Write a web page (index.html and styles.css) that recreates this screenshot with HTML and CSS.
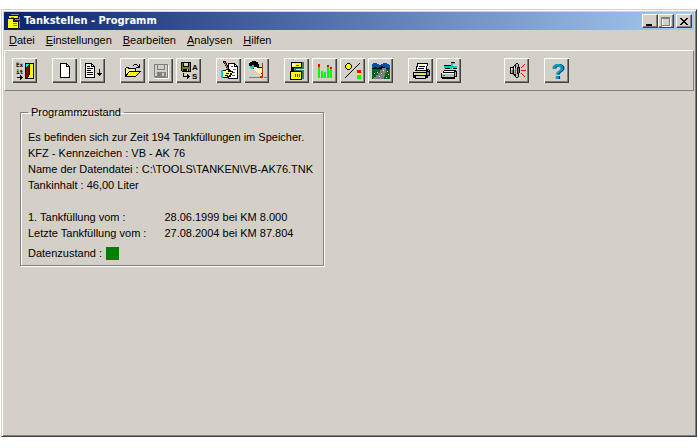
FILE: index.html
```html
<!DOCTYPE html>
<html lang="de">
<head>
<meta charset="utf-8">
<title>Tankstellen - Programm</title>
<link rel="stylesheet" href="styles.css">
</head>
<body>
<main class="window">
  <header class="titlebar">
    <svg class="app-icon" viewBox="0 0 16 16" aria-hidden="true"><path fill="#111" d="M2 2h2V1h9v1h-1v5H7v1h6v8H1V7h1z"/><path fill="#888" d="M4 1h8v1H4zM12 4h1v3H8V6h4zM12 8h1v7h-1z"/><path fill="#ff0" d="M2 3h9v2H2zM1 6h5v3h5v6H1z"/><path fill="#880" d="M6 10h4v1H6zM6 12h4v1H6zM4 4h3v1H4z"/></svg>
    <h1 class="title">Tankstellen - Programm</h1>
    <div class="window-controls">
      <button class="control" aria-label="Minimieren"><svg viewBox="0 0 13 11"><path d="M3 8h6v2H3z"/></svg></button>
      <button class="control" aria-label="Maximieren" disabled><svg viewBox="0 0 13 11"><path fill="none" stroke="#fff" d="M3.500 2.500h8v8h-8z"/><path fill="none" stroke="#808080" d="M2.500 1.500h8v8h-8zM2 2.500h9"/></svg></button>
      <button class="control close" aria-label="Schließen"><svg viewBox="0 0 13 11"><path d="M3 2h2v1h1v1h2V3h1V2h2v1h-1v1H9v1H8v1h1v1h1v1h1v1H9V8H8V7H6v1H5v1H3V8h1V7h1V6h1V5H5V4H4V3H3z"/></svg></button>
    </div>
  </header>
  <nav class="menubar">
    <button class="menu"><u>D</u>atei</button>
    <button class="menu"><u>E</u>instellungen</button>
    <button class="menu"><u>B</u>earbeiten</button>
    <button class="menu"><u>A</u>nalysen</button>
    <button class="menu"><u>H</u>ilfen</button>
  </nav>
  <div class="toolbar" role="toolbar" aria-label="Werkzeuge">
    <div class="group">
      <button class="tool" aria-label="Programm beenden"><svg viewBox="0 0 25 25"><text class="tiny" x="4" y="9">Ex</text><text class="tiny" x="4" y="16">it</text><path d="M5 19h3v-2h1v1h1v1h1v1h-1v1H9v1H8v-2H5zM13 5h9v16h-9z"/><path fill="#0ff" d="M14 6h3v1h-1v1h-1v1h-1z"/><path fill="#800000" d="M14 9h1V8h1V7h1v10h-1v2h-1v1h-1z"/><path fill="#ff0" d="M18 6h3v14h-5v-1h1v-2h1z"/></svg></button>
    </div>
    <div class="group">
      <button class="tool" aria-label="Neu"><svg viewBox="0 0 25 25"><path d="M8 5h7v1h1v1h1v1h1v12H8z"/><path fill="#fff" d="M9 6h5v3h3v10H9zM15 7h1v1h-1z"/></svg></button>
      <button class="tool" aria-label="Liste"><svg viewBox="0 0 25 25"><path d="M5 5h7v1h1v1h1v1h1v12H5z"/><path fill="#fff" d="M6 6h5v3h3v10H6zM12 7h1v1h-1z"/><path d="M7 8h3v1H7zM7 10h6v1H7zM7 12h4v1H7zM7 14h6v1H7zM7 16h6v1H7zM19 11h1v4h2v1h-1v1h-1v1h-1v-1h-1v-1h-1v-1h2z"/></svg></button>
    </div>
    <div class="group">
      <button class="tool" aria-label="Öffnen"><svg viewBox="0 0 25 25"><path d="M6 9h3v1h7v3h5v1h-1v1h-1v1h-1v1h-1v1h-1v1H5v-9h1z"/><path fill="#ffff80" d="M6 10h2v1h7v2H9v1H8v1H7v1H6z"/><path fill="#ff0" d="M9 14h10v1h-1v1h-1v1h-1v1H7v-1h1v-2h1z"/><path d="M13 7h1V6h3v1h1v1h1V6h1v4h-4V9h2V8h-1V7h-3v1h-1z"/></svg></button>
      <button class="tool" aria-label="Speichern" disabled><svg viewBox="0 0 25 25"><path fill="none" stroke="#fff" d="M7 20.500h13.500V7"/><path fill="#808080" fill-rule="evenodd" d="M6 6h14v14H7l-1-1zM7 7v11h2v-4h9v5h1V7h-2v5H9V7zM10 7v4h6V7zM14 15v3h2v-3z"/></svg></button>
      <button class="tool" aria-label="Speichern unter"><svg viewBox="0 0 25 25"><path d="M5 4h10v10H6l-1-1z"/><path fill="#808000" d="M6 5h1v4h6V5h1v8h-1v-2H7v2H6z"/><path fill="#d4d0c8" d="M8 5h4v3H8zM11 11h1v2h-1z"/><path d="M7 15h1v3h3v-2h1v1h1v1h1v1h-1v1h-1v1h-1v-2H7z"/><text class="letter" x="16" y="12">A</text><text class="letter" x="16" y="21">S</text></svg></button>
    </div>
    <div class="group">
      <button class="tool" aria-label="Bearbeiten"><svg viewBox="0 0 25 25"><path d="M12 5h7v1h1v1h1v1h1v13H12z"/><path fill="#fff" d="M13 6h5v3h3v11h-8zM19 7h1v1h-1z"/><path fill="#666" d="M15 8h2v1h-2zM17 11h3v1h-3zM17 14h2v1h-2zM16 17h3v1h-3z"/><path d="M7 12h3v-1h3v1h2v1h2v2h-1v2h-1v2h-2v1H7z"/><path fill="#0cc" d="M5 12h2v8H5z"/><path fill="#ff8" d="M7 13h3v-1h2v2h4v1h-2v2h-1v1h-2v1H7z"/><path d="M10 15h3v1h-3zM9 17h3v1H9z"/><path d="M7 3h3v2h1v2h1v2h1v2h1v2h-1v1h-1v-2h-1v-2h-1V8H9V6H8V5H7z"/><path fill="#d05020" d="M8 4h1v1h1v2h1v2h1v2h-1V9h-1V7H9V5H8z"/></svg></button>
      <button class="tool" aria-label="Löschen"><svg viewBox="0 0 25 25"><path d="M6 4h2V3h4v1h2v2h1v3h3v7h-2v-1h-1v-1h-2v-1h-1v-1H9v-1H7v-2H6V8H5V5h1z"/><path fill="#0cc" d="M6 8h2V7h2v3H9v1H7v-1H6z"/><path fill="#ff8" d="M10 9h3v1h5v5h-1v2h-1v-1h-1v-1h-1v-1h-2v-1h-1v-1H9v-1h1z"/><path fill="#fff" d="M12 10h1v1h-1zM14 11h1v1h-1zM12 12h1v1h-1zM14 13h1v1h-1zM16 12h1v1h-1z"/><path fill="#904020" d="M18 5h1v13h-1z"/><path fill="#808080" d="M5 19h11v1H5zM20 19h3v1h-3z"/><path fill="#e02000" d="M16 18h3v2h-3z"/></svg></button>
    </div>
    <div class="group">
      <button class="tool" aria-label="Tankstelle"><svg viewBox="0 0 25 25"><path fill="#377" d="M9 4h11v7h-8v1h8v9h-3v-7h-8V7z"/><path d="M7 4h11v6h-8v3h8v9H6v-9h1z"/><path fill="#ff0" d="M8 5h9v4H8zM7 14h10v7H7z"/><path fill="#fff" d="M8 6h3v2H8z"/><path fill="#f00" d="M12 7h3v1h-3zM11 16h1v3h-1zM13 16h1v3h-1zM15 16h1v3h-1z"/></svg></button>
      <button class="tool" aria-label="Balkendiagramm"><svg viewBox="0 0 25 25"><path fill="#0f0" d="M6 9h2v11H6zM9 13h2v7H9zM12 14h2v6h-2zM15 9h2v11h-2zM18 11h2v9h-2z"/><path fill="#f00" d="M6 6h2v3H6zM15 7h2v2h-2zM18 9h2v2h-2z"/></svg></button>
      <button class="tool" aria-label="Prozentwerte"><svg viewBox="0 0 25 25"><path stroke="#000" d="M5 20L20 5"/><path stroke="#000" fill="#ff0" d="M7.500 5.500h2l2 2v2l-2 2h-2l-2-2v-2z"/><path fill="#f00" d="M17 12h4v3h-4z"/><path fill="#ff0" d="M17 15h4v2h-4z"/><path fill="#0f0" d="M17 17h4v4h-4z"/></svg></button>
      <button class="tool" aria-label="Strecke"><svg viewBox="0 0 25 25"><path fill="#006820" d="M4 8h18v13H4z"/><path fill="#0050b0" d="M4 6h1V5h4v1h2v1h2V6h2V5h4v1h2v1h1v4H4z"/><path d="M4 10h2V9h3v1h2V9h2V8h2v1h2v1h4v1H4z"/><path fill="#808080" d="M14 10h4v5h-1v3h-1v3H5v-1h1v-1h2v-2h2v-2h2v-3h2z"/><path fill="#fff" d="M15 12h1v1h-1zM13 15h1v1h-1zM11 18h1v1h-1zM6 15h1v1H6zM9 14h1v1H9zM19 13h1v1h-1zM20 16h1v1h-1zM18 19h1v1h-1z"/></svg></button>
    </div>
    <div class="group">
      <button class="tool" aria-label="Drucken"><svg viewBox="0 0 25 25"><path d="M9 5h11v3h-1v3h2v1h1v6h-2v2h-2v1H7v-1H5v-6h2v-2h1V8h1z"/><path fill="#fff" d="M10 6h9v2h-1v4H9V9h1z"/><path d="M11 8h6v1h-6zM10 10h6v1h-6z"/><path fill="#d4d0c8" d="M7 13h11v1H7zM6 15h12v2H6zM20 12h1v1h-1zM8 18h9v2H8z"/><path fill="#ff0" d="M12 16h4v1h-4z"/><path fill="#808080" d="M19 14h2v3h-2z"/></svg></button>
      <button class="tool" aria-label="Drucker einrichten"><svg viewBox="0 0 25 25"><path d="M8 12h12v1h1v6h-2v2H6v-1H5v-5h2v-2h1z"/><path fill="#fff" d="M8 13h10v1H7zM6 15h12v1H6z"/><path fill="#bbb" d="M6 16h12v3H6zM19 14h1v4h-1z"/><path fill="#f00" d="M7 17h2v1H7z"/><path d="M8 7h7v1H8zM9 10h5v1H9zM15 4h4v1h-4zM17 10h4v1h-4z"/><path fill="#0cc" d="M8 8h7V5h4v1h-2v2h4v2h-5v1h-2v-1H8z"/></svg></button>
    </div>
    <div class="group sound">
      <button class="tool" aria-label="Ton"><svg viewBox="0 0 25 25"><path d="M6 9h3V8h1V7h1V6h1V5h2v1h1v3h1v6h-1v4h-1v1h-2v-1h-1v-1h-1v-1H9v-1H6z"/><path fill="#bbb" d="M7 10h2v5H7zM10 8h1v8h-1zM12 6h2v3h-1v7h1v3h-2z"/><path fill="#666" d="M8 12h1v3H8zM11 10h1v6h-1zM14 10h1v5h-1z"/><path fill="#fff" d="M7 10h1v1H7zM10 9h1v2h-1z"/><path fill="#f00" d="M17 12h5v1h-5zM17 9h1V8h1V7h1V6h1v1h-1v1h-1v1h-1v1h-1zM17 15h1v1h1v1h1v1h1v1h-1v-1h-1v-1h-1v-1h-1z"/></svg></button>
    </div>
    <div class="group">
      <button class="tool" aria-label="Hilfe"><svg viewBox="0 0 25 25"><text class="question shade" x="8" y="21">?</text><text class="question" x="7" y="21">?</text></svg></button>
    </div>
  </div>
  <section class="content">
    <fieldset class="status">
      <legend>Programmzustand</legend>
      <p>Es befinden sich zur Zeit 194 Tankfüllungen im Speicher.</p>
      <p>KFZ - Kennzeichen : VB - AK 76</p>
      <p>Name der Datendatei : C:\TOOLS\TANKEN\VB-AK76.TNK</p>
      <p>Tankinhalt : 46,00 Liter</p>
      <dl class="fills">
        <dt>1. Tankfüllung vom :</dt><dd>28.06.1999 bei KM 8.000</dd>
        <dt>Letzte Tankfüllung vom :</dt><dd>27.08.2004 bei KM 87.804</dd>
      </dl>
      <p class="data-state">Datenzustand : <span class="lamp"></span></p>
    </fieldset>
  </section>
</main>
</body>
</html>
```
FILE: styles.css
```css
* { box-sizing: border-box; }
body {
  margin: 0;
  padding: 9px 1px 11px;
  min-height: 100vh;
  display: flex;
  background: #fff;
  color: #000;
  font: 11px/16px "Liberation Sans", Arial, sans-serif;
}
button { font: inherit; color: inherit; margin: 0; padding: 0; }
svg { display: block; shape-rendering: crispEdges; }

.window {
  flex: 1;
  display: flex;
  flex-direction: column;
  padding: 1px;
  background: #d4d0c8;
  border: 1px solid;
  border-color: #d4d0c8 #404040 #404040 #d4d0c8;
  box-shadow: inset 1px 1px #fff, inset -1px -1px #808080;
}

.titlebar {
  display: flex;
  align-items: center;
  height: 18px;
  margin: 1px 1px 0;
  padding: 0 2px 0 3px;
  background: linear-gradient(90deg, #0a246a, #a6caf0);
}
.app-icon { width: 16px; height: 16px; }
.title {
  flex: 1;
  margin: 0 0 0 1px;
  color: #fff;
  font: bold 11px/18px "DejaVu Sans Condensed", "DejaVu Sans", sans-serif;
}
.window-controls { display: flex; }
.control {
  width: 16px;
  height: 14px;
  border: 1px solid;
  border-color: #fff #404040 #404040 #fff;
  background: #d4d0c8;
  box-shadow: inset -1px -1px #808080;
}
.control svg { width: 13px; height: 11px; }
.close { margin-left: 2px; }

.menubar {
  display: flex;
  gap: 11px;
  height: 20px;
  padding: 0 6px;
}
.menu {
  border: 0;
  background: none;
  line-height: 20px;
}

.toolbar {
  display: flex;
  gap: 15px;
  margin: 0 1px;
  padding: 7px;
  border: 1px solid;
  border-color: #fff #808080 #808080 #fff;
}
.group { display: flex; gap: 3px; }
.sound { margin-left: 28px; }
.tool {
  width: 25px;
  height: 25px;
  border: 0;
  background: #d4d0c8;
  box-shadow: inset 1px 1px #fff, inset -1px -1px #404040, inset -2px -2px #808080;
}
.tool svg { width: 25px; height: 25px; }
.tiny { font: bold 6px "DejaVu Sans Mono", monospace; }
.letter { font: bold 8px "Liberation Sans", sans-serif; }
.question { font: bold 22px "Liberation Sans", sans-serif; fill: #00a0b0; }
.shade { fill: #000080; }

.content { flex: 1; padding: 13px 17px; }
.status {
  width: max-content;
  max-width: 100%;
  margin: 0;
  padding: 9px 10px 4px 7px;
  border: 1px solid #808080;
  box-shadow: 1px 1px #fff, inset 1px 1px #fff;
}
.status legend { padding: 0 3px; }
.status p { margin: 0; }
.fills {
  display: grid;
  grid-template-columns: max-content 1fr;
  column-gap: 18px;
  margin: 16px 0 4px;
}
.fills dd { margin: 0; }
.data-state { display: flex; align-items: center; gap: 4px; }
.lamp { width: 13px; height: 13px; background: #008000; }
```
